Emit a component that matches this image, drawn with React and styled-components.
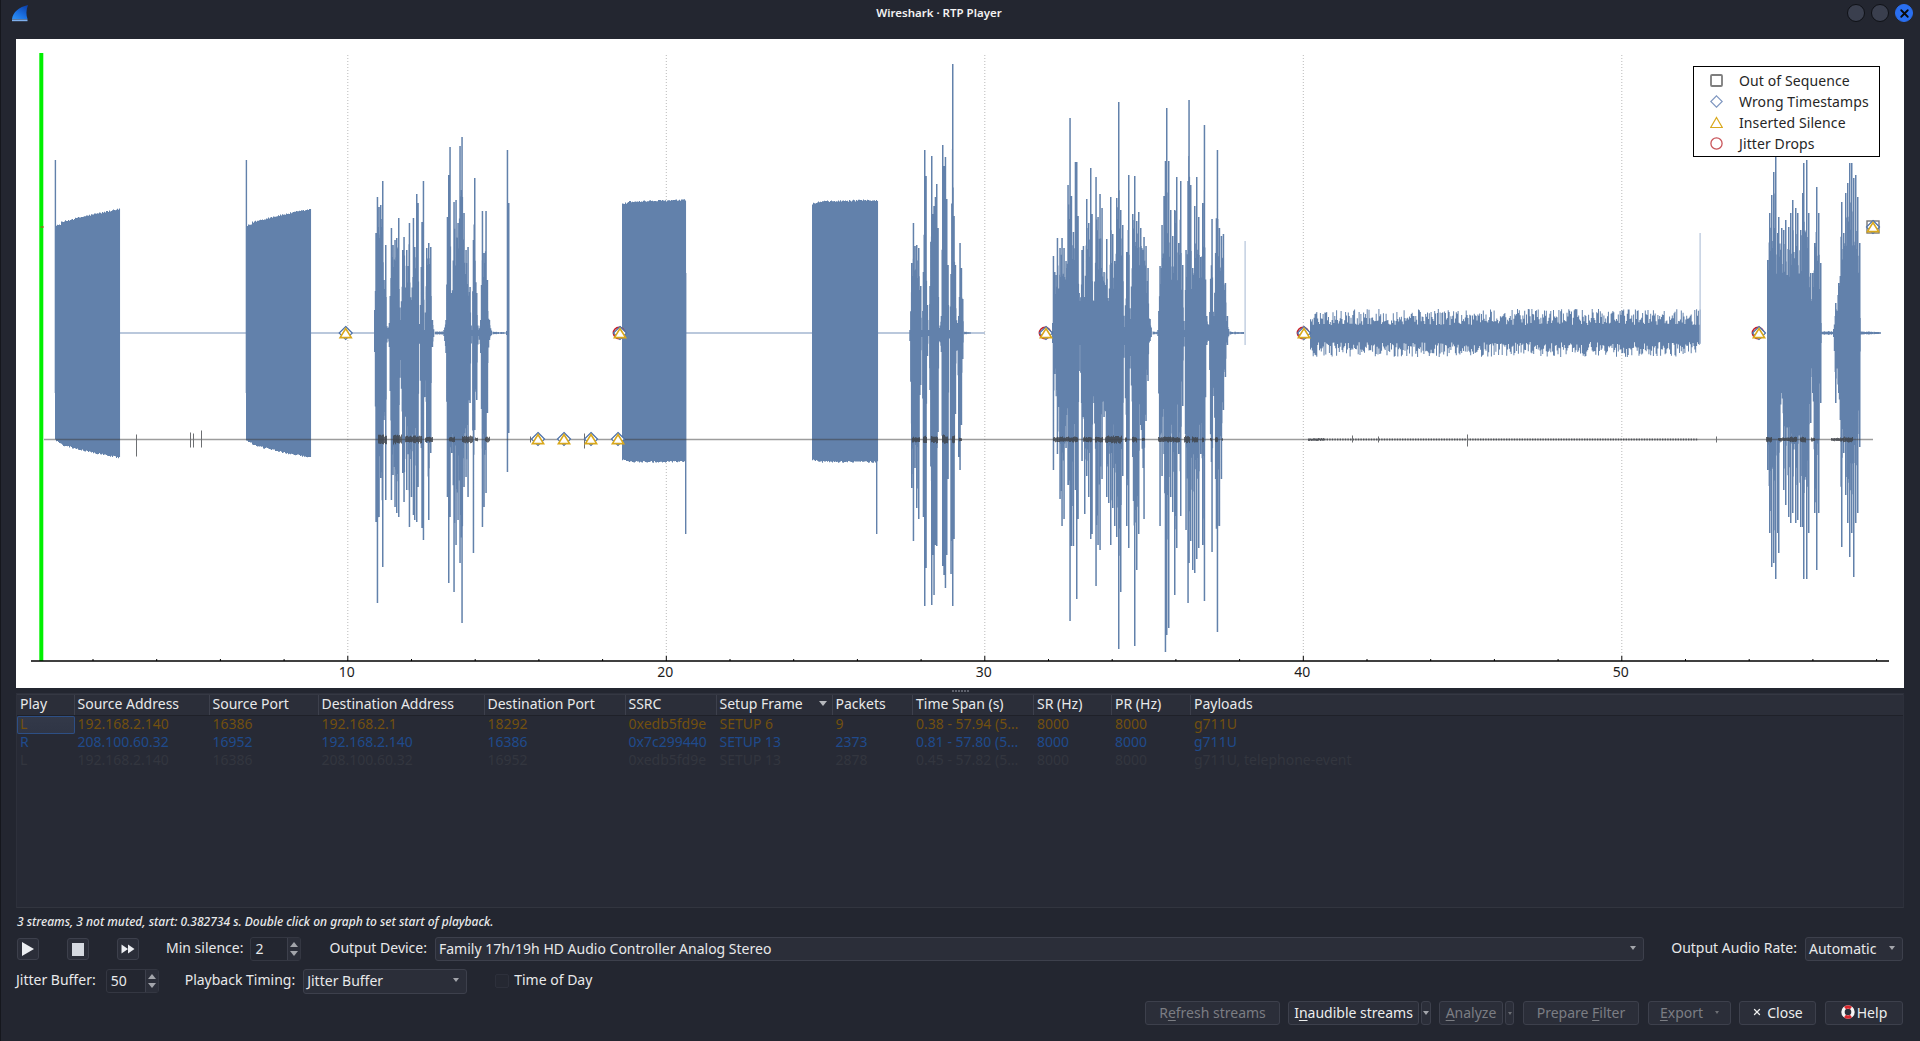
import React from "react";
import styled, { createGlobalStyle } from "styled-components";
import { X } from "lucide-react";

const Global = createGlobalStyle`
  html, body { margin: 0; padding: 0; height: 1041px; overflow: hidden; background: #232630; }
  body { font-family: "Noto Sans", "Liberation Sans", sans-serif; font-size: 14px; color: #e6e6e6; }
  * { box-sizing: border-box; }
`;

/* ---------- waveform data ---------- */
let seed = 12345;
const rnd = () => { seed = (seed * 1664525 + 1013904223) % 4294967296; return seed / 4294967296; };
const CY = 333, BY = 439.5;

const map3 = (x0, s, list) => list.map(([p, u, d]) => [x0 + p / s, u, d]);

const burstA = map3(360, 3, [[42,23,19],[46,100,189],[50,136,270],[55,126,184],[60,128,145],[66,152,234],[70,53,87],[75,88,167],[80,5,5],[86,10,14],[92,105,167],[97,88,142],[103,93,174],[108,95,180],[114,115,184],[120,13,27],[126,83,140],[130,96,169],[138,83,157],[146,110,194],[152,33,164],[158,115,182],[162,86,187],[168,139,189],[172,130,154],[177,6,7],[184,111,195],[188,152,207],[192,3,64],[198,85,110],[204,90,187],[210,86,120],[215,13,14],[222,4,4],[250,3,3],[256,13,20],[260,116,164],[264,158,250],[268,186,184],[273,40,120],[280,131,259],[286,133,212],[292,110,187],[298,187,230],[304,196,290],[310,120,154],[316,83,144],[322,86,164],[328,46,70],[334,3,3],[338,93,220],[342,155,97],[348,40,67],[354,3,3],[360,13,20],[365,122,194],[370,80,174],[376,122,160],[380,53,80],[386,13,7],[395,3,3],[430,2,2],[438,2,2],[440,183,139],[444,130,100],[445,2,2]]);

const burstB = map3(900, 3, [[28,3,8],[33,70,155],[38,110,208],[43,87,135],[48,88,175],[54,85,186],[60,47,52],[64,3,4],[68,61,184],[72,183,273],[76,157,235],[80,28,23],[85,3,3],[88,47,57],[93,177,272],[97,119,222],[100,127,262],[104,136,212],[108,149,213],[112,105,99],[116,5,8],[122,17,19],[126,188,233],[130,167,242],[134,176,255],[138,134,222],[142,68,146],[147,3,4],[151,59,241],[156,269,273],[160,117,206],[164,68,81],[170,10,17],[174,17,124],[178,90,137],[182,65,92],[186,34,26],[190,3,3],[210,2,2]]);

const burstC = map3(1040, 3, [[36,10,10],[38,77,137],[42,61,41],[50,95,121],[58,85,166],[64,95,193],[70,85,186],[76,72,115],[82,148,152],[88,215,288],[92,137,213],[98,101,213],[104,171,157],[108,171,266],[112,117,186],[118,32,12],[124,83,128],[128,87,84],[132,36,181],[138,134,143],[144,110,164],[150,165,206],[154,119,201],[160,32,70],[166,156,253],[172,116,212],[178,139,217],[184,125,146],[190,61,84],[198,94,164],[204,32,170],[210,136,212],[216,99,175],[222,72,193],[228,135,204],[234,231,316],[240,123,259],[246,108,143],[252,6,12],[258,81,193],[264,158,215],[270,14,23],[276,119,124],[282,157,313],[288,112,237],[294,121,201],[300,105,92],[310,96,186],[316,87,88],[322,65,48],[328,14,8],[335,3,3],[352,3,3],[358,67,193],[364,108,143],[370,137,121],[374,172,319],[378,225,302],[384,172,295],[390,123,164],[396,97,179],[402,123,262],[408,156,215],[414,90,121],[420,152,183],[426,68,73],[432,3,4],[436,83,197],[442,152,270],[445,233,230],[450,148,208],[456,65,237],[462,127,240],[468,156,226],[474,116,215],[480,76,121],[486,130,212],[491,208,268],[498,17,12],[505,8,8],[514,114,219],[520,17,63],[530,183,299],[536,105,193],[542,97,146],[548,99,77],[554,50,44],[560,17,12],[566,3,3],[610,2,2]]);

const burstE = [[1767,73,137],[1769,120,200],[1771,138,234],[1773,161,230],[1775,176,246],[1777,100,200],[1778,116,220],[1781,105,60],[1783,103,157],[1785,113,172],[1788,106,184],[1790,120,190],[1792,133,180],[1795,125,190],[1797,120,187],[1800,103,194],[1802,140,194],[1803,170,246],[1806,173,246],[1808,120,200],[1810,60,90],[1812,60,60],[1814,90,180],[1816,146,237],[1818,120,180],[1820,70,70],[1821,4,4],[1833,4,4],[1835,30,70],[1838,50,60],[1841,131,214],[1843,100,120],[1845,140,162],[1847,150,190],[1849,170,224],[1851,170,200],[1853,155,244],[1855,158,190],[1857,136,180],[1859,90,114],[1860,4,4],[1880,2,2]];

const bar = (x, w, u, d, c = CY) => `M${x.toFixed(1)} ${(c - u).toFixed(1)}h${w}V${(c + d).toFixed(1)}h-${w}Z`;

const speech = (list) => {
  let p = "";
  for (let i = 0; i < list.length - 1; i++) {
    const [x, u, d] = list[i];
    const [nx, nu, nd] = list[i + 1];
    const quiet = u < 8 && nu < 8;
    if (!quiet) p += bar(x, 1.5, u, d);
    for (let cx = x + 0.8; cx < nx; cx += 0.8) {
      const t = (cx - x) / (nx - x);
      const f = quiet ? 0.25 + 0.25 * rnd() : 0.5 + 0.35 * rnd();
      p += bar(cx, 1, (u + (nu - u) * t) * f, (d + (nd - d) * t) * f);
    }
  }
  return p;
};

const block = (x0, x1, u0, u1, d0, d1) => {
  let p = "";
  for (let x = x0; x < x1; x += 1) {
    const t = Math.pow((x - x0) / (x1 - x0), 0.75);
    const dip = x - x0 < 6 ? 1.5 : 0;
    p += bar(x, 1.05, u0 + (u1 - u0) * t + rnd() * 1.8 - dip, d0 + (d1 - d0) * t + rnd() * 1.8 - dip);
  }
  return p;
};

const noise = (x0, x1) => {
  let p = "";
  for (let x = x0; x < x1; x += 0.9) {
    const r = rnd();
    const s = rnd();
    p += bar(x, 1, 8 + r * 16, 9 + s * 15);
  }
  return p;
};

const WAVE = [
  block(55, 120, 107, 123, 108, 124),
  bar(54.7, 1.4, 173, 60),
  block(246, 311, 107, 123, 108, 124),
  bar(245.7, 1.4, 173, 60),
  block(622, 686, 130, 132, 128, 128),
  bar(685, 1.4, 60, 201),
  block(812, 878, 130, 132, 128, 128),
  bar(876, 1.4, 60, 201),
  speech(burstA),
  speech(burstB),
  speech(burstC),
  noise(1310, 1700),
  speech(burstE),
].join("");

const blobs = [[378,387,5],[393,402,5],[405,422,4],[425,433,3],[449,455,3],[462,473,4],[475,478,2],[485,490,3],[912,920,3],[923,927,4],[931,938,4],[942,948,5],[952,955,4],[959,962,2],[1053,1078,3],[1083,1092,3],[1095,1103,3],[1105,1122,4],[1125,1127,3],[1132,1137,3],[1142,1145,2],[1158,1180,3],[1184,1190,4],[1192,1198,3],[1202,1204,3],[1210,1212,2],[1215,1218,3],[1222,1223,2],[1308,1324,1.5],[1766,1772,3],[1778,1797,2],[1790,1797,3],[1800,1806,3],[1811,1815,2],[1831,1853,2],[1843,1853,3]];
const BLOB = blobs.map(([a, b, h]) => {
  let p = "";
  for (let x = a; x < b; x += 1) p += bar(x, 1, h * (0.55 + 0.45 * rnd()), h * (0.55 + 0.45 * rnd()), BY);
  return p;
}).join("") + (() => {
  let p = "";
  for (let x = 1324; x < 1697; x += 2.6) p += bar(x, 1.4, 1.1, 1.1, BY);
  return p;
})();
const PINS = [[136,5,17],[190,7,8],[193,6,8],[201,9,8],[530,3,3],[584,6,9],[1352,4,3],[1378,3,3],[1467,5,7],[1716,3,3]]
  .map(([x, u, d]) => bar(x, 1, u, d, BY)).join("");

const TICKS = [2,4,6,8,12,14,16,18,22,24,26,28,32,34,36,38,42,44,46,48,52,54,56,58];
const tx = (t) => 347.8 + (t - 10) * 31.85;

/* ---------- styled parts ---------- */
const Window = styled.div`
  width: 1920px; height: 1041px; overflow: hidden;
  display: flex; flex-direction: column;
  background: #232630;
  border-left: 1px solid #15171d;
`;
const TitleBar = styled.header`
  height: 39px; flex: none; display: flex; align-items: flex-start;
  padding: 4px 7px 0 10px; position: relative;
`;
const Title = styled.div`
  position: absolute; left: 0; right: 43px; top: 4px; text-align: center;
  font-size: 11.5px; font-weight: 600; line-height: 18px; color: #f2f2f2; pointer-events: none;
`;
const WinButtons = styled.div`
  margin-left: auto; display: flex; gap: 6px;
`;
const WinButton = styled.div`
  width: 18px; height: 18px; border-radius: 50%;
  border: 1px solid ${(p) => (p.$close ? "#2a6ff0" : "#0f1116")};
  background: ${(p) => (p.$close ? "#2a6ff0" : "#3a3f4e")};
  display: flex; align-items: center; justify-content: center; color: #0a0a0a;
`;
const Plot = styled.section`
  height: 649px; flex: none; margin: 0 16px 0 15px; background: #fff; position: relative;
`;
const PlotSvg = styled.svg`
  display: block; width: 100%; height: 100%;
`;
const Legend = styled.div`
  position: absolute; left: 1677px; top: 27px; width: 187px; height: 91px;
  border: 1.5px solid #000; background: #fff; padding-top: 3px; color: #262626;
`;
const LegendRow = styled.div`
  height: 21px; display: grid; grid-template-columns: 45px 1fr; align-items: center;
  font-size: 14px; line-height: 21px; white-space: nowrap; letter-spacing: 0.1px;
  svg { justify-self: center; margin-left: -1px; }
`;
const Splitter = styled.div`
  height: 5px; flex: none; display: flex; justify-content: center; align-items: center; gap: 1px;
  i { display: block; width: 2px; height: 2px; background: #5d606b; }
`;
const Table = styled.section`
  height: 215px; flex: none; margin: 0 16px 0 15px; background: #272a35;
  border: 1px solid #2d303b; border-bottom-color: #32353f;
`;
const COLUMNS = "57.5px 135px 109px 166px 141px 91px 116px 80.5px 121px 78px 79px 1fr";
const HeadRow = styled.div`
  height: 22px; display: grid; grid-template-columns: ${COLUMNS};
  background: #2b2e39; border-top: 1px solid #353843; border-bottom: 1px solid #1f2129;
`;
const HeadCell = styled.div`
  padding-left: 3px; line-height: 18px; font-size: 14px; color: #e8e9ea; white-space: nowrap;
  border-right: 1px solid #3d404c; position: relative;
  &:last-child { border-right: 0; }
`;
const SortMark = styled.span`
  position: absolute; right: 5px; top: 6px; width: 0; height: 0;
  border-left: 4px solid transparent; border-right: 4px solid transparent; border-top: 5px solid #b6b8bd;
`;
const BodyRow = styled.div`
  height: 18px; display: grid; grid-template-columns: ${COLUMNS}; color: ${(p) => p.$color};
`;
const Cell = styled.div`
  padding-left: 3px; line-height: 16px; font-size: 14px; white-space: nowrap;
  ${(p) => p.$selected && "background: linear-gradient(#333949, #2f3545); box-shadow: inset 0 0 0 1px #2d4f85; border-radius: 2px;"}
`;
const Status = styled.div`
  height: 29px; flex: none; padding: 0 0 0 16px; font-style: italic; font-size: 12px; font-weight: 500;
  line-height: 28px; color: #e8e9ea;
`;
const ControlRow = styled.div`
  height: 24px; flex: none; display: flex; align-items: center; margin-bottom: 8px;
  padding: 0 17px 0 ${(p) => (p.$inset ? 15 : 16)}px;
`;
const IconButton = styled.button`
  width: 22px; height: 22px; padding: 0; margin: 0 28px 0 0; display: flex; align-items: center; justify-content: center;
  background: #2b2e39; border: 1px solid #3d404c; border-radius: 3px;
`;
const Label = styled.span`
  font-size: 14px; line-height: 18px; padding-bottom: 2px; color: #e8e9ea; white-space: nowrap; margin-right: ${(p) => p.$gap ?? 7}px;
  margin-left: ${(p) => p.$lead ?? 0}px;
`;
const Spin = styled.div`
  width: ${(p) => p.$w}px; height: 24px; display: flex; align-items: center;
  background: #232630; border: 1px solid #343742; border-radius: 3px;
  font-size: 14px; color: #e8e9ea; padding-left: 4px;
`;
const SpinValue = styled.span`
  flex: 1; padding-bottom: 2px;
`;
const SpinArrows = styled.div`
  width: 13px; height: 100%; background: #2b2e39; border-left: 1px solid #3d404c;
  display: flex; flex-direction: column; align-items: center; justify-content: space-evenly;
`;
const Arrow = styled.i`
  display: block; width: 0; height: 0;
  border-left: ${(p) => p.$s ?? 4}px solid transparent; border-right: ${(p) => p.$s ?? 4}px solid transparent;
  ${(p) => (p.$up ? "border-bottom" : "border-top")}: ${(p) => (p.$s ?? 4) + 1}px solid ${(p) => p.$c ?? "#a3a5ab"};
`;
const Combo = styled.div`
  ${(p) => (p.$w ? `width: ${p.$w}px;` : "flex: 1;")}
  height: ${(p) => p.$h ?? 24}px; display: flex; align-items: center; justify-content: space-between;
  padding: 0 7px 2px 3px; background: #2b2e39; border: 1px solid #3d404c; border-radius: 3px;
  font-size: 14px; color: #e8e9ea; white-space: nowrap;
`;
const Check = styled.span`
  width: 14px; height: 14px; margin: 0 5px 0 28px; display: block; background: #252832; border: 1px solid #2d303b; border-radius: 2px;
`;
const ButtonRow = styled.div`
  height: 24px; flex: none; display: flex; align-items: center; justify-content: flex-end; padding-right: 17px;
`;
const Btn = styled.button`
  width: ${(p) => p.$w}px; height: 24px; margin-left: ${(p) => p.$gap ?? 8}px; padding: 0 0 2px;
  display: flex; align-items: center; justify-content: center; gap: ${(p) => p.$iconGap ?? 0}px;
  font: 14px "Noto Sans", "Liberation Sans", sans-serif; white-space: nowrap;
  color: ${(p) => (p.disabled ? "#7b7d83" : "#eceded")};
  background: #2b2e39; border: 1px solid #3d404c; border-radius: 3px;
  u { text-underline-offset: 2px; }
`;
const ArrowBtn = styled(Btn)`
  margin-left: 2px; padding: 0;
`;

/* ---------- drawings ---------- */
const Marker = ({ x, y, circle, boxed }) => (
  <g fill="none">
    {boxed && <rect x={x - 6} y={y - 6} width="12" height="12" fill="#fff" stroke="#777" strokeWidth="1.4" />}
    {circle && <circle cx={x - 1} cy={y} r="5.6" fill="#fff" stroke="#c7202a" strokeWidth="1.6" />}
    <path d={`M${x} ${y - 6.5}L${x + 6.5} ${y}L${x} ${y + 6.5}L${x - 6.5} ${y}Z`} fill="#fff" stroke="#4a6fa8" strokeWidth="1.2" />
    <path d={`M${x} ${y - 4.5}L${x + 5.6} ${y + 4.6}H${x - 5.6}Z`} fill="#fff" stroke="#d9a81c" strokeWidth="1.6" />
  </g>
);

const Fin = () => (
  <svg width="18" height="18" viewBox="0 0 18 18">
    <defs>
      <linearGradient id="fin" x1="0.9" y1="0" x2="0.2" y2="1">
        <stop offset="0" stopColor="#0c3fa8" />
        <stop offset="0.6" stopColor="#1a6fe0" />
        <stop offset="1" stopColor="#2c8cf0" />
      </linearGradient>
    </defs>
    <path d="M1 15C2 8 8 3 17 1C15 6 15 11 16.500 15Z" fill="url(#fin)" />
    <rect x="1" y="15.400" width="15.500" height="1.800" fill="#7fb0ee" />
  </svg>
);

const LifeBuoy = () => (
  <svg width="14" height="14" viewBox="0 0 14 14">
    <circle cx="7" cy="7" r="5" fill="none" stroke="#f4f4f4" strokeWidth="3.4" />
    <path d="M3 1.800A6.600 6.600 0 0 1 11 1.800L9 4.300A3.300 3.300 0 0 0 5 4.300ZM3 12.200A6.600 6.600 0 0 0 11 12.200L9 9.700A3.300 3.300 0 0 1 5 9.700Z" fill="#d8262c" />
  </svg>
);

const legendItems = [
  ["Out of Sequence", <rect x="1" y="1" width="11" height="11" rx="1" fill="none" stroke="#7d7d7d" strokeWidth="1.8" />],
  ["Wrong Timestamps", <path d="M6.500 0.800L12.200 6.500L6.500 12.200L0.800 6.500Z" fill="none" stroke="#7f97c0" strokeWidth="1.2" />],
  ["Inserted Silence", <path d="M6.500 1.500L12.300 11.500H0.700Z" fill="none" stroke="#d9a81c" strokeWidth="1.2" />],
  ["Jitter Drops", <circle cx="6.500" cy="6.500" r="5.600" fill="none" stroke="#c9555a" strokeWidth="1.3" />],
];

const HEADERS = ["Play", "Source Address", "Source Port", "Destination Address", "Destination Port", "SSRC", "Setup Frame", "Packets", "Time Span (s)", "SR (Hz)", "PR (Hz)", "Payloads"];
const ROWS = [
  { color: "#72500f", cells: ["L", "192.168.2.140", "16386", "192.168.2.1", "18292", "0xedb5fd9e", "SETUP 6", "9", "0.38 - 57.94 (5…", "8000", "8000", "g711U"], selected: true },
  { color: "#1f4a8c", cells: ["R", "208.100.60.32", "16952", "192.168.2.140", "16386", "0x7c299440", "SETUP 13", "2373", "0.81 - 57.80 (5…", "8000", "8000", "g711U"] },
  { color: "#33363f", cells: ["L", "192.168.2.140", "16386", "208.100.60.32", "16952", "0xedb5fd9e", "SETUP 13", "2878", "0.45 - 57.82 (5…", "8000", "8000", "g711U, telephone-event"] },
];

const SpinBox = ({ value, w }) => (
  <Spin $w={w}>
    <SpinValue>{value}</SpinValue>
    <SpinArrows><Arrow $up $s={4} /><Arrow $s={4} /></SpinArrows>
  </Spin>
);

export default function App() {
  return (
    <Window>
      <Global />
      <TitleBar>
        <Fin />
        <Title>Wireshark · RTP Player</Title>
        <WinButtons>
          <WinButton />
          <WinButton />
          <WinButton $close><X size={13} strokeWidth={3.4} /></WinButton>
        </WinButtons>
      </TitleBar>

      <Plot>
        <PlotSvg viewBox="16 39 1888 649">
          {[10, 20, 30, 40, 50].map((t) => (
            <line key={t} x1={tx(t)} x2={tx(t)} y1="55" y2="656" stroke="#b9b9b9" strokeWidth="1" strokeDasharray="1 2" />
          ))}
          <path d={`M120 ${CY}H246M311 ${CY}H375M685 ${CY}H812M878 ${CY}H985`} stroke="#a4b6d1" strokeWidth="1.3" fill="none" />
          <path d={WAVE} fill="#6281ab" />
          <path d={bar(1699.5, 1.2, 100, 11) + bar(1244.5, 1.2, 92, 12)} fill="#b4c4da" />
          <path d={`M44 ${BY}H1873`} stroke="rgba(60,60,60,0.5)" strokeWidth="1.4" fill="none" />
          <path d={BLOB} fill="rgba(62,66,72,0.8)" />
          <path d={PINS} fill="#6d6f72" />
          <rect x="39.300" y="53" width="4" height="608" fill="#00f000" />
          <rect x="40.500" y="226.500" width="3.500" height="1" fill="#c04a20" />
          <Marker x={345.7} y={333} />
          <Marker x={620} y={333} circle />
          <Marker x={1046} y={333} circle />
          <Marker x={1304} y={333} circle />
          <Marker x={1759} y={333} circle />
          <Marker x={538} y={439} />
          <Marker x={564} y={439} />
          <Marker x={591} y={439} />
          <Marker x={618} y={439} />
          <Marker x={1873} y={227} boxed />
          <path d="M31 661H1889" stroke="#000" strokeWidth="1.500" />
          {[10, 20, 30, 40, 50].map((t) => (
            <g key={t}>
              <path d={`M${tx(t)} 656V661`} stroke="#000" strokeWidth="1" />
              <text x={tx(t) - 1} y="677" textAnchor="middle" fontFamily="Noto Sans" fontSize="14" fill="#1c1c1c">{t}</text>
            </g>
          ))}
          {TICKS.map((t) => (
            <path key={t} d={`M${tx(t)} 659V661`} stroke="#000" strokeWidth="1" />
          ))}
        </PlotSvg>
        <Legend>
          {legendItems.map(([label, icon]) => (
            <LegendRow key={label}>
              <svg width="13" height="13" viewBox="0 0 13 13">{icon}</svg>
              <span>{label}</span>
            </LegendRow>
          ))}
        </Legend>
      </Plot>

      <Splitter>{[0, 1, 2, 3, 4, 5].map((i) => <i key={i} />)}</Splitter>

      <Table>
        <HeadRow>
          {HEADERS.map((h) => (
            <HeadCell key={h}>{h}{h === "Setup Frame" && <SortMark />}</HeadCell>
          ))}
        </HeadRow>
        {ROWS.map((r, i) => (
          <BodyRow key={i} $color={r.color}>
            {r.cells.map((c, j) => (
              <Cell key={j} $selected={r.selected && j === 0}>{c}</Cell>
            ))}
          </BodyRow>
        ))}
      </Table>

      <Status>3 streams, 3 not muted, start: 0.382734 s. Double click on graph to set start of playback.</Status>

      <ControlRow>
        <IconButton>
          <svg width="14" height="16" viewBox="0 0 14 16"><path d="M1 1L13 8L1 15Z" fill="#eceef2" /></svg>
        </IconButton>
        <IconButton>
          <svg width="14" height="14" viewBox="0 0 14 14"><rect x="1" y="1" width="12" height="13" fill="#d6dae1" /></svg>
        </IconButton>
        <IconButton>
          <svg width="14" height="12" viewBox="0 0 14 12"><path d="M0.500 1.500L7 6L0.500 10.500ZM7 1.500L13.500 6L7 10.500Z" fill="#eceef2" /></svg>
        </IconButton>
        <Label $lead={-1}>Min silence:</Label>
        <SpinBox value="2" w={51} />
        <Label $lead={28} $gap={8}>Output Device:</Label>
        <Combo>
          Family 17h/19h HD Audio Controller Analog Stereo
          <Arrow $s={3.500} />
        </Combo>
        <Label $lead={27} $gap={8}>Output Audio Rate:</Label>
        <Combo $w={98}>
          Automatic
          <Arrow $s={3.500} />
        </Combo>
      </ControlRow>

      <ControlRow $inset>
        <Label $gap={10}>Jitter Buffer:</Label>
        <SpinBox value="50" w={53} />
        <Label $lead={26} $gap={8}>Playback Timing:</Label>
        <Combo $w={164} $h={25}>
          Jitter Buffer
          <Arrow $s={3.500} />
        </Combo>
        <Check />
        <Label>Time of Day</Label>
      </ControlRow>

      <ButtonRow>
        <Btn disabled $w={135}><span>R<u>e</u>fresh streams</span></Btn>
        <Btn $w={131}><span>I<u>n</u>audible streams</span></Btn>
        <ArrowBtn $w={10}><Arrow $s={3} /></ArrowBtn>
        <Btn disabled $w={64}><span><u>A</u>nalyze</span></Btn>
        <ArrowBtn disabled $w={9}><Arrow $s={2.500} $c="#6d6f75" /></ArrowBtn>
        <Btn disabled $w={116} $gap={9}><span>Prepare <u>F</u>ilter</span></Btn>
        <Btn disabled $w={83} $gap={9} $iconGap={12}><span><u>E</u>xport</span><Arrow $s={2.500} $c="#6d6f75" /></Btn>
        <Btn $w={77} $iconGap={5}><X size={10} strokeWidth={3} />Close</Btn>
        <Btn $w={78} $gap={9} $iconGap={2}><LifeBuoy />Help</Btn>
      </ButtonRow>
    </Window>
  );
}
